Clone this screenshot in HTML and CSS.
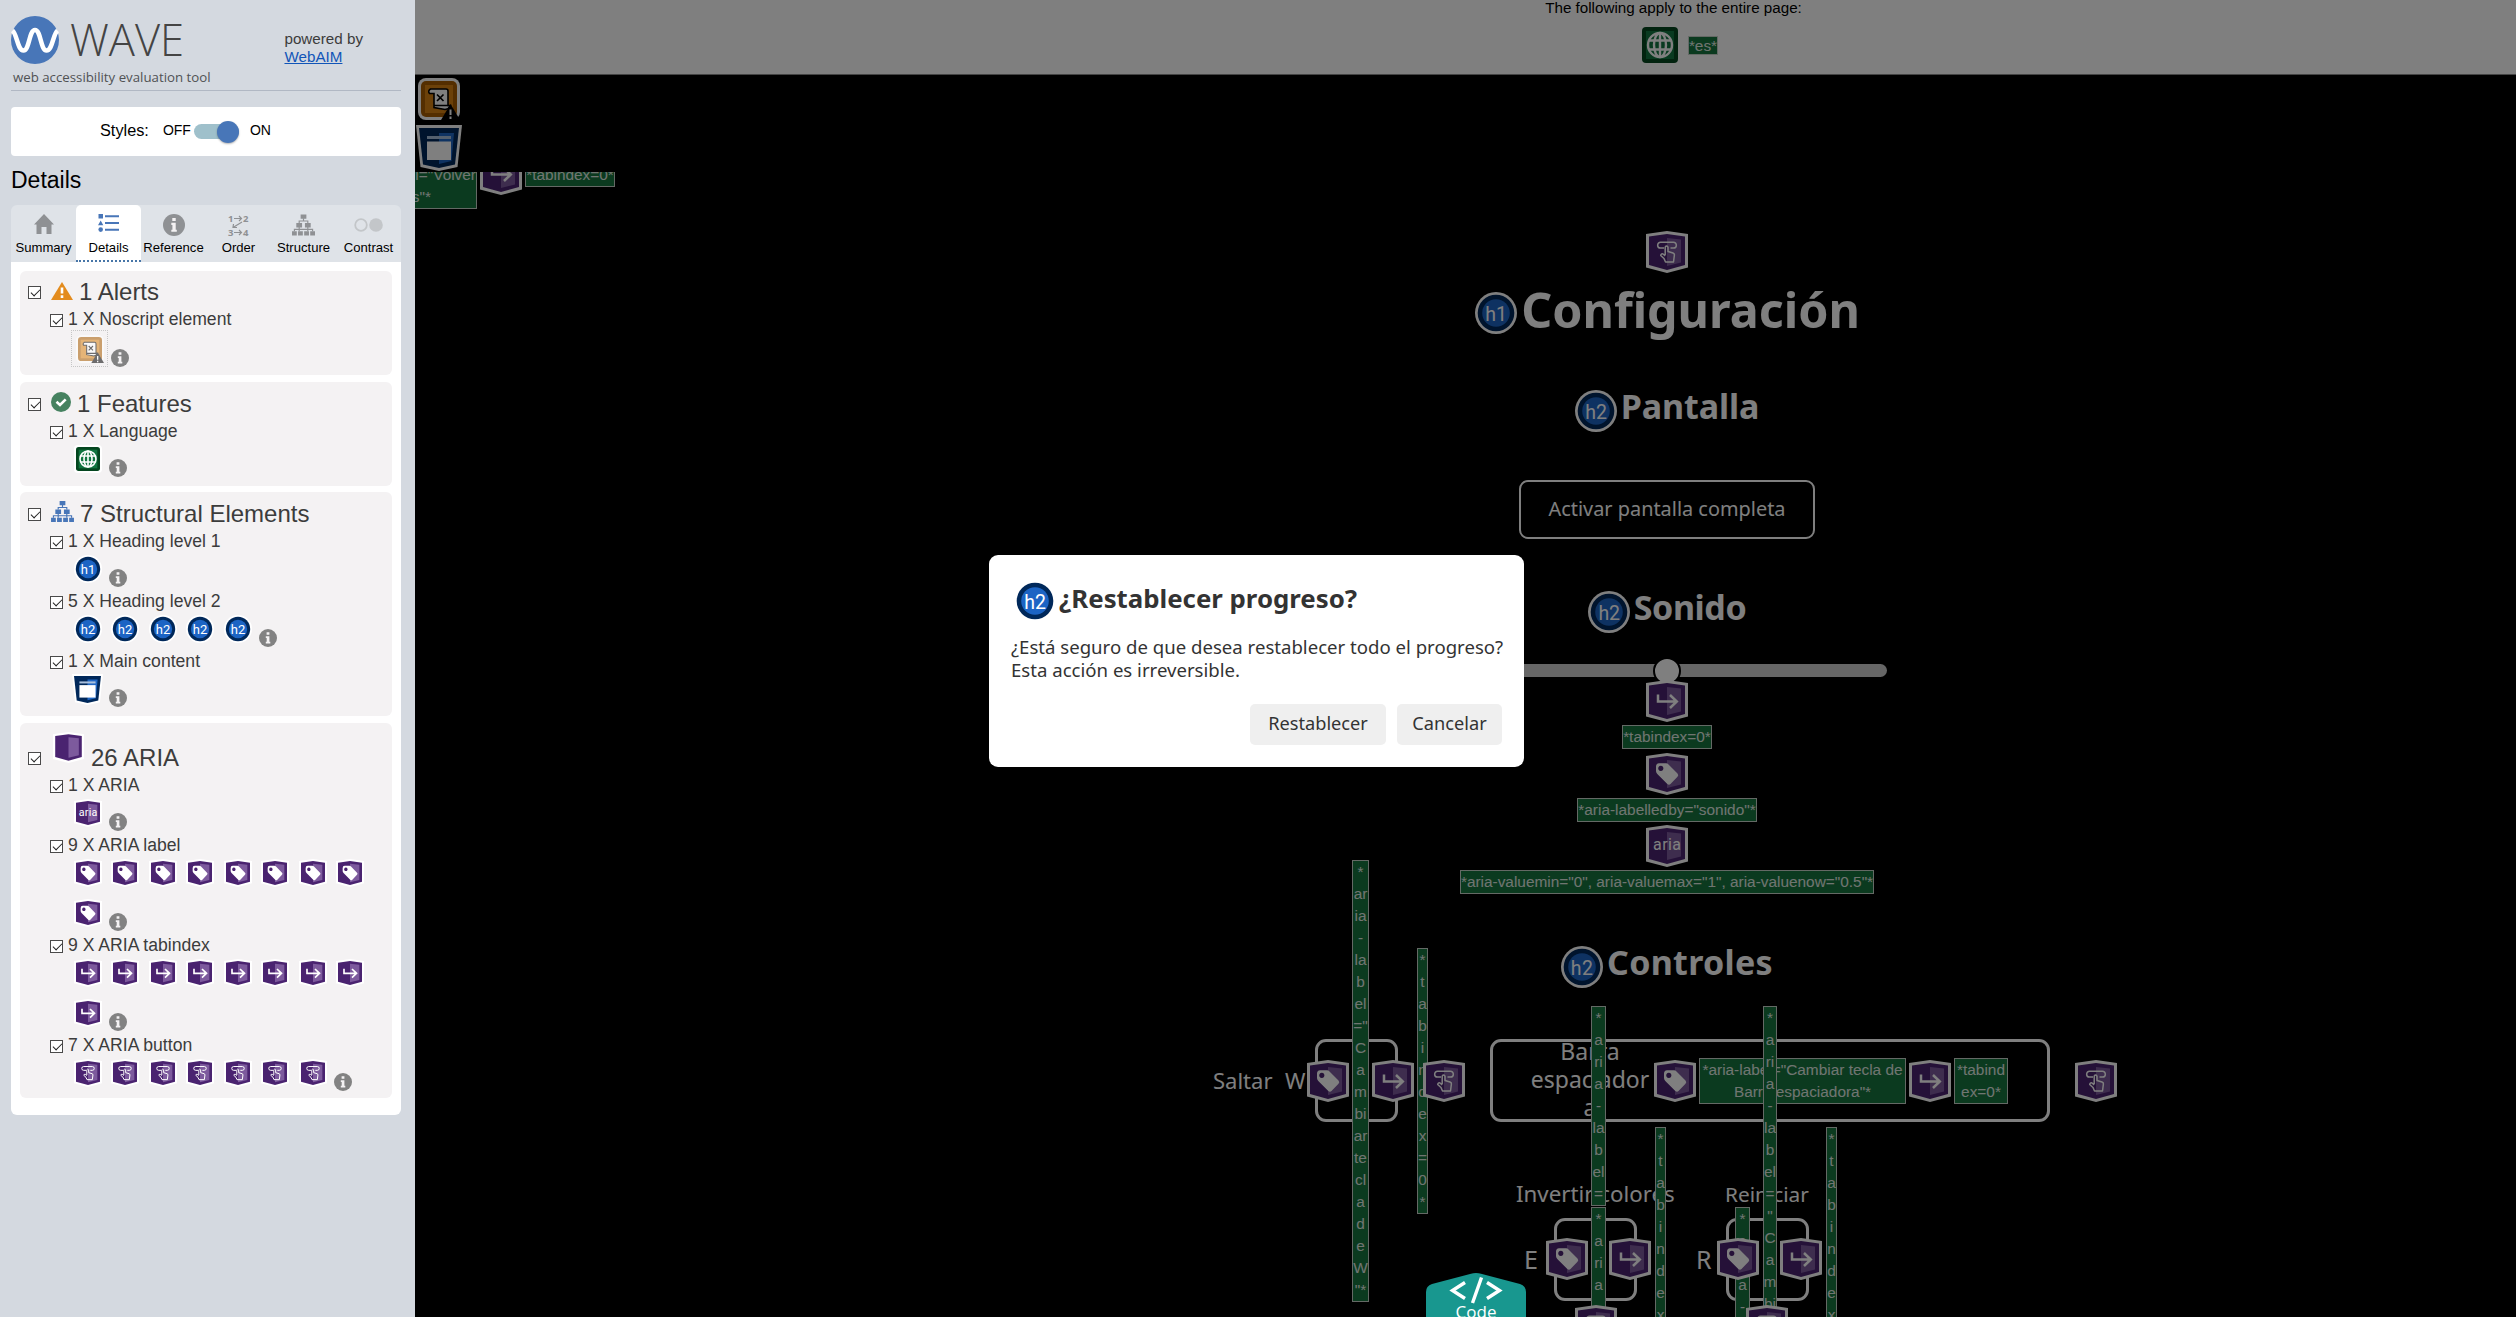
FILE: index.html
```html
<!DOCTYPE html>
<html lang="es">
<head>
<meta charset="utf-8">
<title>WAVE - Configuración</title>
<link rel="stylesheet" href="styles.css">
</head>
<body>
<svg class="sprite" aria-hidden="true">
  <symbol id="i-box" viewBox="0 0 42 42">
    <path d="M0 3 21 0 42 3V36.500L21 42 0 36.500Z" fill="#fff"/>
    <path d="M3 5.500 21 3 39 5.500V34L21 39 3 34Z" fill="#4a2370"/>
    <path d="M21 7 35 8.500V31.500L21 35Z" fill="#7d5a9d"/>
  </symbol>
  <symbol id="i-label" viewBox="0 0 42 42">
    <use href="#i-box"/>
    <path fill-rule="evenodd" d="M10 13.500Q10 10.500 13 10.300L20 10.300Q21.500 10.400 22.500 11.400L31.500 20.500Q33 22.200 31.500 23.800L24.500 31Q23 32.500 21.300 31L11.300 21Q10 19.500 10 18ZM14.800 12.800a2.600 2.600 0 1 0 .01 0Z" fill="#fff"/>
  </symbol>
  <symbol id="i-tab" viewBox="0 0 42 42">
    <use href="#i-box"/>
    <path d="M12 14.500V21.500H30.500M24 15 30.800 21.500 24 28" fill="none" stroke="#fff" stroke-width="2.500"/>
  </symbol>
  <symbol id="i-aria" viewBox="0 0 42 42">
    <use href="#i-box"/>
    <text x="21" y="25" text-anchor="middle" textLength="28" class="glyph-aria">aria</text>
  </symbol>
  <symbol id="i-button" viewBox="0 0 42 42">
    <use href="#i-box"/>
    <path d="M18 17H14.500A2.800 2.800 0 0 1 14.500 11.300H27.500A2.800 2.800 0 0 1 27.500 17H24.500" fill="none" stroke="#fff" stroke-width="1.500"/>
    <path d="M19.200 24V16.200Q20.500 14 22 16.200V20.500L27 22Q28.600 22.500 28.400 24L27.500 31H19.500L18 27.500 14.700 24.500Q15 22.300 17 23L19.200 24.800" fill="none" stroke="#fff" stroke-width="1.500" stroke-linejoin="round"/>
  </symbol>
  <symbol id="i-h1" viewBox="0 0 42 42">
    <circle cx="21" cy="21" r="21" fill="#fff"/><circle cx="21" cy="21" r="18.300" fill="#00285a"/><circle cx="21" cy="21" r="13.800" fill="#1c64c4"/>
    <text x="21" y="28.500" text-anchor="middle" class="glyph-h">h1</text>
  </symbol>
  <symbol id="i-h2" viewBox="0 0 42 42">
    <circle cx="21" cy="21" r="21" fill="#fff"/><circle cx="21" cy="21" r="18.300" fill="#00285a"/><circle cx="21" cy="21" r="13.800" fill="#1c64c4"/>
    <text x="21" y="28.500" text-anchor="middle" class="glyph-h">h2</text>
  </symbol>
  <symbol id="i-lang" viewBox="0 0 42 42">
    <rect width="42" height="42" rx="6" fill="#fff"/><rect x="3" y="3" width="36" height="36" rx="4" fill="#04461f"/><rect x="7" y="7" width="28" height="28" fill="#127540"/>
    <g fill="none" stroke="#fff" stroke-width="2.400"><circle cx="21" cy="21" r="12"/><ellipse cx="21" cy="21" rx="6" ry="12"/><path d="M21 9V33M10 16.500H32M10 25.500H32"/></g>
  </symbol>
  <symbol id="i-main" viewBox="0 0 46 46">
    <path d="M0 0H46L41.500 42 23 46 4.500 42Z" fill="#fff"/><path d="M3 3H43L39 39.500 23 43 7 39.500Z" fill="#00285a"/>
    <path d="M23 8H38L35.500 36 23 39Z" fill="#1f66c4"/><path d="M11 11H35V14H11Z" fill="#a9c0dd"/><path d="M11 16.500H35V35H11Z" fill="#fff"/>
  </symbol>
  <symbol id="i-noscript" viewBox="0 0 42 42">
    <rect width="42" height="42" rx="8" fill="#fff"/><rect x="3" y="3" width="36" height="36" rx="5" fill="#a85c00"/><rect x="7" y="7" width="28" height="28" fill="#d98212"/>
    <path d="M15 11H28Q30 11 30 13V27.500H32.500Q31 31 27 31.500L16 29.500V15.500H11.500Q9.500 13 12.500 11Z" fill="#fff" stroke="#000" stroke-width="1.600"/>
    <path d="M19 16.500 25.500 23M25.500 16.500 19 23M16 27.500H31" stroke="#000" stroke-width="1.700" fill="none"/>
    <path d="M32.500 26 42 42H23Z" fill="#000"/><path d="M32.500 31.500V37M32.500 38.500V41" stroke="#fff" stroke-width="2"/>
  </symbol>
  <symbol id="i-info" viewBox="0 0 18 18">
    <circle cx="9" cy="9" r="9"/><path d="M7.600 3.200H10.400V5.800H7.600ZM6.800 7.200H10.400V12.800H11.300V14.500H6.800V12.800H7.700V8.900H6.800Z" fill="#f4f2f3"/>
  </symbol>
  <symbol id="i-tree" viewBox="0 0 24 22">
    <path d="M9 0h6v4.500H9zM4.500 9h6v4.500h-6zM13.500 9h6v4.500h-6zM0 17.500h5V22H0zM6.300 17.500h5V22h-5zM12.700 17.500h5V22h-5zM19 17.500h5V22h-5z"/>
    <path d="M12 4V6.800M7.500 9V6.800H16.500V9M7.500 13V17.500M16.500 13V17.500M2.500 17.500V15.500H21.500V17.500" fill="none" stroke="currentColor" stroke-width="1.200"/>
  </symbol>
</svg>

<div class="app">
<aside class="sidebar">
  <header class="brand">
    <div class="brand-mark">
      <div class="logo-row">
        <svg class="logo" viewBox="0 0 48 48"><circle cx="24" cy="24" r="24" fill="#4876b8"/><path d="M1.500 14.500C6 18 6.500 34.500 12.500 34.500S18 14 24 14 29.500 34.500 35.500 34.500 42 18 46.500 14.500" fill="none" stroke="#fff" stroke-width="4.600"/></svg>
        <span class="wordmark">WAVE</span>
      </div>
      <div class="tagline">web accessibility evaluation tool</div>
    </div>
    <div class="powered">powered by<br><a href="#">WebAIM</a></div>
  </header>

  <div class="styles-toggle">
    <span class="toggle-title">Styles:</span><span class="toggle-off">OFF</span><span class="switch"><span class="knob"></span></span><span>ON</span>
  </div>

  <h1 class="panel-title">Details</h1>

  <nav class="tabs">
    <div class="tab"><svg class="t-home" viewBox="0 0 20 20"><path d="M10 0 20 10.500H17.500V20H12.500V13H7.500V20H2.500V10.500H0Z"/></svg>Summary</div>
    <div class="tab active"><svg class="t-list" viewBox="0 0 21 18"><path d="M.5 0H5V4.500H.5ZM2.700 6.500 5.300 11.300H0ZM7 1.300H21V3.300H7ZM7 8H21V10H7ZM7 14.700H21V16.700H7Z"/><circle cx="2.700" cy="15.600" r="2.300"/></svg>Details</div>
    <div class="tab"><svg class="t-info"><use href="#i-info"/></svg>Reference</div>
    <div class="tab"><svg class="t-order" viewBox="0 0 21 22"><text x="0" y="8">1</text><text x="15" y="8">2</text><text x="0" y="22">3</text><text x="15" y="22">4</text><path d="M6 4.500H13.500M11 2 13.500 4.500 11 7M6 18.500H13.500M11 16 13.500 18.500 11 21M14 8 5 13.500M5.500 10 5 13.500H9" fill="none" stroke="#8f9194" stroke-width="1.200"/></svg>Order</div>
    <div class="tab"><svg class="t-tree"><use href="#i-tree"/></svg>Structure</div>
    <div class="tab"><svg class="t-contrast" viewBox="0 0 29 14"><circle cx="7" cy="7" r="5.800" fill="none" stroke="#c3c6c9" stroke-width="1.800"/><circle cx="22" cy="7" r="6.800" fill="#c3c6c9"/></svg>Contrast</div>
  </nav>

  <div class="panel">
    <section class="group first">
      <h2 class="group-title"><span class="check"></span><svg class="gi warn" viewBox="0 0 22 18"><path d="M11 0 22 18H0Z" fill="#e38b1d"/><path d="M11 5.500V11.500M11 13.300V16" stroke="#fff" stroke-width="2.600"/></svg>1 Alerts</h2>
      <h3 class="item-title"><span class="check"></span>1 X Noscript element</h3>
      <div class="icons"><span class="slot hidden-icon"><svg><use href="#i-noscript"/></svg></span><svg class="info"><use href="#i-info"/></svg></div>
    </section>
    <section class="group">
      <h2 class="group-title"><span class="check"></span><svg class="gi ok" viewBox="0 0 20 20"><circle cx="10" cy="10" r="10" fill="#468260"/><path d="M5.500 9.800 9 13 14.700 7.300" fill="none" stroke="#fff" stroke-width="2.600"/></svg>1 Features</h2>
      <h3 class="item-title"><span class="check"></span>1 X Language</h3>
      <div class="icons"><span class="slot"><svg><use href="#i-lang"/></svg></span><svg class="info"><use href="#i-info"/></svg></div>
    </section>
    <section class="group">
      <h2 class="group-title"><span class="check"></span><svg class="gi tree"><use href="#i-tree"/></svg>7 Structural Elements</h2>
      <h3 class="item-title"><span class="check"></span>1 X Heading level 1</h3>
      <div class="icons"><span class="slot"><svg><use href="#i-h1"/></svg></span><svg class="info"><use href="#i-info"/></svg></div>
      <h3 class="item-title"><span class="check"></span>5 X Heading level 2</h3>
      <div class="icons"><span class="slot"><svg><use href="#i-h2"/></svg></span><span class="slot"><svg><use href="#i-h2"/></svg></span><span class="slot"><svg><use href="#i-h2"/></svg></span><span class="slot"><svg><use href="#i-h2"/></svg></span><span class="slot"><svg><use href="#i-h2"/></svg></span><svg class="info"><use href="#i-info"/></svg></div>
      <h3 class="item-title"><span class="check"></span>1 X Main content</h3>
      <div class="icons"><span class="slot"><svg class="wide"><use href="#i-main"/></svg></span><svg class="info"><use href="#i-info"/></svg></div>
    </section>
    <section class="group aria-group">
      <h2 class="group-title"><span class="check"></span><svg class="gi box"><use href="#i-box"/></svg>26 ARIA</h2>
      <h3 class="item-title"><span class="check"></span>1 X ARIA</h3>
      <div class="icons"><span class="slot"><svg><use href="#i-aria"/></svg></span><svg class="info"><use href="#i-info"/></svg></div>
      <h3 class="item-title"><span class="check"></span>9 X ARIA label</h3>
      <div class="icons"><span class="slot"><svg><use href="#i-label"/></svg></span><span class="slot"><svg><use href="#i-label"/></svg></span><span class="slot"><svg><use href="#i-label"/></svg></span><span class="slot"><svg><use href="#i-label"/></svg></span><span class="slot"><svg><use href="#i-label"/></svg></span><span class="slot"><svg><use href="#i-label"/></svg></span><span class="slot"><svg><use href="#i-label"/></svg></span><span class="slot"><svg><use href="#i-label"/></svg></span><span class="slot"><svg><use href="#i-label"/></svg></span><svg class="info"><use href="#i-info"/></svg></div>
      <h3 class="item-title"><span class="check"></span>9 X ARIA tabindex</h3>
      <div class="icons"><span class="slot"><svg><use href="#i-tab"/></svg></span><span class="slot"><svg><use href="#i-tab"/></svg></span><span class="slot"><svg><use href="#i-tab"/></svg></span><span class="slot"><svg><use href="#i-tab"/></svg></span><span class="slot"><svg><use href="#i-tab"/></svg></span><span class="slot"><svg><use href="#i-tab"/></svg></span><span class="slot"><svg><use href="#i-tab"/></svg></span><span class="slot"><svg><use href="#i-tab"/></svg></span><span class="slot"><svg><use href="#i-tab"/></svg></span><svg class="info"><use href="#i-info"/></svg></div>
      <h3 class="item-title"><span class="check"></span>7 X ARIA button</h3>
      <div class="icons"><span class="slot"><svg><use href="#i-button"/></svg></span><span class="slot"><svg><use href="#i-button"/></svg></span><span class="slot"><svg><use href="#i-button"/></svg></span><span class="slot"><svg><use href="#i-button"/></svg></span><span class="slot"><svg><use href="#i-button"/></svg></span><span class="slot"><svg><use href="#i-button"/></svg></span><span class="slot"><svg><use href="#i-button"/></svg></span><svg class="info"><use href="#i-info"/></svg></div>
    </section>
  </div>
</aside>

<div class="viewport">
  <div class="page-notes">
    <p>The following apply to the entire page:</p>
    <div class="page-icons"><svg class="icon"><use href="#i-lang"/></svg><span class="tag small">*es*</span></div>
  </div>

  <main class="page">
    <svg class="icon"><use href="#i-button"/></svg>
    <h1 class="heading big"><svg class="icon"><use href="#i-h1"/></svg><span>Configuración</span></h1>
    <h2 class="heading pantalla"><svg class="icon"><use href="#i-h2"/></svg><span>Pantalla</span></h2>
    <button class="fullscreen">Activar pantalla completa</button>
    <h2 class="heading sonido"><svg class="icon"><use href="#i-h2"/></svg><span>Sonido</span></h2>
    <div class="slider"><span class="thumb"></span></div>
    <div class="slider-notes">
      <svg class="icon"><use href="#i-tab"/></svg><span class="tag">*tabindex=0*</span>
      <svg class="icon"><use href="#i-label"/></svg><span class="tag">*aria-labelledby="sonido"*</span>
      <svg class="icon"><use href="#i-aria"/></svg><span class="tag">*aria-valuemin="0", aria-valuemax="1", aria-valuenow="0.5"*</span>
    </div>
    <h2 class="heading controles"><svg class="icon"><use href="#i-h2"/></svg><span>Controles</span></h2>

    <div class="controls">
      <div class="key-row">
        <span class="key-name">Saltar</span><span class="key-char">W</span>
        <span class="key"></span>
        <span class="key space"><span>Barra<br>espaciador<br>a</span></span>
      </div>
      <div class="key-cols">
        <div class="key-col"><span class="col-name">Invertir colores</span><span class="key-line"><span class="key-char">E</span><span class="key"></span></span></div>
        <div class="key-col reset"><span class="col-name">Reiniciar</span><span class="key-line"><span class="key-char">R</span><span class="key"></span></span></div>
      </div>

      <span class="tag note n-wlabel">*
ar
ia
-
la
b
el
="
C
a
m
bi
ar
te
cl
a
d
e
W
"*</span>
      <span class="tag note n-wtab">*
t
a
b
i
n
d
e
x
=
0
*</span>
      <svg class="icon note p1"><use href="#i-label"/></svg>
      <svg class="icon note p2"><use href="#i-tab"/></svg>
      <svg class="icon note p3"><use href="#i-button"/></svg>

      <svg class="icon note p4"><use href="#i-label"/></svg>
      <span class="tag note n-space">*aria-label="Cambiar tecla de
Barra espaciadora"*</span>
      <svg class="icon note p5"><use href="#i-tab"/></svg>
      <span class="tag note n-spacetab">*tabind
ex=0*</span>
      <svg class="icon note p6"><use href="#i-button"/></svg>

      <span class="tag note n-e">*
a
ri
a
-
la
b
el
=</span>
      <span class="tag note n-e2">*
a
ri
a
-</span>
      <span class="tag note n-etab">*
t
a
b
i
n
d
e
x</span>
      <span class="tag note n-r2">*
a
ri
a
-</span>
      <span class="tag note n-r">*
a
ri
a
-
la
b
el
=
"
C
a
m
bi</span>
      <span class="tag note n-rtab">*
t
a
b
i
n
d
e
x</span>
      <svg class="icon note p7"><use href="#i-label"/></svg>
      <svg class="icon note p8"><use href="#i-tab"/></svg>
      <svg class="icon note p9"><use href="#i-button"/></svg>
      <svg class="icon note p10"><use href="#i-label"/></svg>
      <svg class="icon note p11"><use href="#i-tab"/></svg>
      <svg class="icon note p12"><use href="#i-button"/></svg>
    </div>
  </main>

  <div class="corner">
    <svg class="icon noscript"><use href="#i-noscript"/></svg>
    <svg class="icon wide"><use href="#i-main"/></svg>
    <div class="back-notes"><span class="tag back-label">l="Volver<br><span class="back-end">s"*</span></span><svg class="icon"><use href="#i-tab"/></svg><span class="tag">*tabindex=0*</span></div>
  </div>
  <div class="backdrop"></div>
</div>
</div>

<div class="code-tab">
  <svg viewBox="0 0 100 60"><path d="M50 0Q53 0 55 .8L94 11Q100 13 100 19V60H0V19Q0 13 6 11L45 .8Q47 0 50 0Z" fill="#18978f"/><path d="M39 9.500 26.500 17.500 39 25.500M61 9.500 73.500 17.500 61 25.500M55.500 4.500 46.500 30" fill="none" stroke="#fff" stroke-width="3.400"/></svg>
  <span>Code</span>
</div>

<div class="dialog" role="dialog">
  <h2 class="dialog-title"><svg class="icon"><use href="#i-h2"/></svg><span>¿Restablecer progreso?</span></h2>
  <p>¿Está seguro de que desea restablecer todo el progreso?<br>Esta acción es irreversible.</p>
  <div class="dialog-actions"><button class="reset-btn">Restablecer</button><button class="cancel-btn">Cancelar</button></div>
</div>
</body>
</html>
```
FILE: styles.css
```css
* { box-sizing: border-box; }
body {
  margin: 0;
  width: 2516px;
  height: 1317px;
  overflow: hidden;
  position: relative;
  font-family: "Liberation Sans", Arial, sans-serif;
  font-size: 16px;
  color: #000;
}
h1, h2, h3, p { margin: 0; font-weight: 400; }
button { border: 0; padding: 0; }
svg { display: block; flex: none; }
.sprite { position: absolute; width: 0; height: 0; }
.glyph-h { font: 400 19.500px Roboto, sans-serif; fill: #fff; }
.glyph-aria { font: 400 16px Roboto, sans-serif; fill: #fff; }
.app { display: flex; height: 1317px; }

/* sidebar */
.sidebar { width: 415px; flex: none; background: #d4d9e0; padding: 0 14px 0 11px; color: #3c3c3c; }
.brand { display: flex; justify-content: space-between; height: 91px; border-bottom: 1px solid #b1b8c4; padding: 15px 38px 0 0; }
.logo-row { display: flex; align-items: center; height: 50px; }
.logo { width: 48px; height: 48px; }
.wordmark { font: 300 43.500px/50px "Open Sans", sans-serif; letter-spacing: 0; margin-left: 11px; color: #444; }
.tagline { font: 400 13.250px/20px "Open Sans", sans-serif; color: #505254; padding-left: 2px; margin-top: 2px; white-space: nowrap; }
.powered { font-size: 15.200px; line-height: 18px; padding-top: 15px; }
.powered a { color: #1155b8; }
.styles-toggle { display: flex; align-items: center; height: 49px; margin-top: 16px; background: #fff; border-radius: 4px; padding: 0 0 3px 89px; font-size: 14px; color: #000; }
.toggle-title { font-size: 16.300px; margin-right: 14px; }
.toggle-off { margin-right: 3px; }
.switch { width: 45px; height: 15px; border-radius: 8px; background: #9fc0cb; margin: 3px 11px 0 0; display: flex; align-items: center; justify-content: flex-end; }
.knob { width: 22px; height: 22px; border-radius: 50%; background: #4876b8; box-shadow: 0 1px 2px rgba(0,0,0,.3); }
.panel-title { font-size: 23px; line-height: 26px; margin-top: 11px; height: 38px; color: #000; }
.tabs { display: flex; height: 57px; background: #dfe3e8; border-radius: 6px 6px 0 0; color: #000; font-size: 13.100px; }
.tab { width: 65px; display: flex; flex-direction: column; align-items: center; justify-content: flex-end; padding-bottom: 7px; line-height: 15px; }
.tab svg { fill: #8f9194; color: #8f9194; }
.tab.active { background: #fff; border-radius: 5px 5px 0 0; border-bottom: 2px dotted #4876a8; padding-bottom: 5px; }
.tab.active svg { fill: #4876b8; }
.t-home { width: 20px; height: 20px; margin-bottom: 6px; }
.t-list { width: 21px; height: 18px; margin-bottom: 8px; }
.t-info { width: 22px; height: 22px; margin-bottom: 4px; }
.t-order { width: 21px; height: 22px; margin-bottom: 4px; overflow: visible; font: 700 9.500px "Open Sans", sans-serif; }
.t-tree { width: 23px; height: 22px; margin-bottom: 4px; }
.t-contrast { width: 29px; height: 14px; margin-bottom: 8px; }

.panel { background: #fff; height: 853px; border-radius: 0 0 6px 6px; padding: 9px; display: flex; flex-direction: column; gap: 6.500px; }
.group { background: #f4f2f3; border-radius: 6px; padding: 6px 0 6px 8px; }
.group.first { padding-top: 5px; padding-bottom: 7px; }
.check { width: 13px; height: 13px; border: 1px solid #4a4a4a; background: #fff; flex: none; display: flex; }
.check::after { content: ""; width: 8px; height: 4px; margin: 2px 0 0 1.500px; border: solid #222; border-width: 0 0 1.500px 1.500px; transform: rotate(-45deg); }
.group-title { display: flex; align-items: center; height: 32px; font-size: 24px; line-height: 32px; white-space: pre; }
.gi { margin: 0 7px 0 10px; }
.group-title .check, .item-title .check { margin-top: 1px; }
.warn { width: 22px; height: 18px; margin: -3px 6px 0 10px; }
.ok { width: 20px; height: 20px; margin: -4px 6px 0 10px; }
.tree { width: 23px; height: 21px; margin: -5px 6px 0 10px; fill: #4876b8; color: #4876b8; }
.item-title { display: flex; align-items: center; height: 24px; font-size: 17.600px; line-height: 22px; padding-left: 22px; gap: 5px; padding-bottom: 2px; }
.item-title .check { margin-top: 3px; }
.icons { display: flex; flex-wrap: wrap; row-gap: 10px; padding: 0 0 6px 41px; }
.slot { width: 37.500px; height: 30px; display: flex; align-items: center; justify-content: center; }
.slot svg { width: 28px; height: 28px; }
.slot svg.wide { width: 31px; height: 31px; }
.hidden-icon { width: 37px; height: 37px; border: 1px dotted #c6c6c6; margin: -2px 0 -5px 2px; }
.hidden-icon svg { opacity: .55; }
.info { width: 18px; height: 18px; fill: #828282; margin: 15px 0 -3px 2.500px; }
.first .info { margin-top: 17px; margin-bottom: -5px; }
.aria-group { padding-top: 6px; padding-bottom: 4px; }
.aria-group .group-title { height: 45px; padding-top: 14px; }
.box { width: 31px; height: 31px; margin: -21px 7px 0 12px; }

/* inspected page */
.viewport { position: relative; flex: 1; overflow: hidden; background: #000; }
.page-notes { width: 2516px; height: 75px; background: #fff; border-bottom: 1px solid #888; text-align: center; font-size: 15.200px; }
.page-notes p { line-height: 16px; height: 25px; padding-left: 1px; }
.page-icons { display: flex; justify-content: center; align-items: center; gap: 7px; padding-left: 11px; height: 40px; }
.icon { width: 42px; height: 42px; }
.icon.wide { width: 46px; height: 46px; }
.tag { font-size: 15.400px; line-height: 22px; color: #e0ebe3; background: #16743f; border: 1px solid #c8d2cb; white-space: pre-line; text-align: center; }
.tag.small { line-height: 17px; font-size: 15.400px; }
.page { width: 2504px; display: flex; flex-direction: column; align-items: center; padding-top: 156px; font-family: "Noto Sans", sans-serif; color: #fff; }
.heading { display: flex; align-items: center; gap: 4px; height: 42px; font-weight: 700; white-space: nowrap; }
.heading span { margin-bottom: 10px; }
.big { margin-top: 19px; font-size: 48.400px; padding-left: 1px; }
.big span { margin-bottom: 9px; }
.pantalla { margin-top: 56px; font-size: 34px; letter-spacing: -.1px; }
.fullscreen { width: 296px; height: 59px; margin-top: 48px; border: 2px solid #fff; border-radius: 9px; background: #000; color: #fff; font: 400 19.900px "Noto Sans", sans-serif; padding-bottom: 3px; }
.sonido { margin-top: 52px; font-size: 34px; letter-spacing: -.4px; }
.slider { width: 440px; height: 13px; margin-top: 31px; border-radius: 7px; background: #ccc; display: flex; align-items: center; justify-content: center; }
.thumb { width: 28px; height: 28px; border: 2px solid #000; border-radius: 50%; background: #fff; flex: none; }
.slider-notes { display: flex; flex-direction: column; align-items: center; gap: 3.300px; margin-top: 3px; font-family: "Liberation Sans", Arial, sans-serif; position: relative; }
.controles { margin-top: 52px; font-size: 34px; letter-spacing: .3px; }
.controls { position: relative; width: 2504px; height: 278px; margin-top: 51px; font-size: 22px; }
.key-row { display: flex; align-items: center; padding-left: 798px; height: 83px; }
.key-name { width: 72px; margin-bottom: 2px; }
.key-char { width: 30px; margin-bottom: 2px; }
.key { width: 83px; height: 83px; border: 3px solid #fff; border-radius: 11px; flex: none; }
.key.space { width: 560px; margin-left: 92px; text-align: center; line-height: 28px; padding-left: 37px; display: flex; align-items: center; font-size: 23px; }
.key.space span { width: 120px; white-space: nowrap; margin-top: -4px; }
.key-cols { display: flex; padding: 58px 0 0 1101px; gap: 23px; }
.key-col { width: 148px; display: flex; flex-direction: column; font-size: 22.300px; }
.col-name { white-space: nowrap; height: 38px; line-height: 28px; }
.reset .col-name { padding-left: 38px; font-size: 20.800px; }
.key-line { display: flex; align-items: center; padding-left: 8px; font-size: 25px; }
.reset .key-line { padding-left: 9px; }

/* inspector annotations float over the inspected controls */
.note { position: absolute; font-family: "Liberation Sans", Arial, sans-serif; }
.n-wlabel { left: 937px; top: -179px; width: 17px; }
.n-wtab { left: 1002px; top: -91px; width: 11px; }
.n-wlabel, .n-wtab, .n-e, .n-e2, .n-etab, .n-r, .n-r2, .n-rtab { display: flex; justify-content: center; }
.n-space { left: 1284px; top: 19px; width: 207px; }
.n-spacetab { left: 1539px; top: 19px; width: 54px; }
.n-e { left: 1176px; top: -33px; width: 15px; }
.n-e2 { left: 1176px; top: 168px; width: 15px; }
.n-etab { left: 1240px; top: 88px; width: 11px; }
.n-r { left: 1348px; top: -33px; width: 14px; }
.n-r2 { left: 1320px; top: 168px; width: 15px; }
.n-rtab { left: 1411px; top: 88px; width: 11px; }
.p1, .p2, .p3, .p4, .p5, .p6 { top: 21px; }
.p1 { left: 892px; } .p2 { left: 957px; } .p3 { left: 1008px; }
.p4 { left: 1239px; } .p5 { left: 1494px; } .p6 { left: 1660px; }
.p7, .p8, .p10, .p11 { top: 199px; }
.p9, .p12 { top: 266px; }
.p7 { left: 1131px; } .p8 { left: 1194px; } .p9 { left: 1160px; }
.p10 { left: 1302px; } .p11 { left: 1365px; } .p12 { left: 1331px; }

.corner { position: absolute; left: 0; top: 78px; width: 210px; }
.corner .noscript { margin-left: 3px; }
.corner .wide { margin: 5px 0 1px 1px; }
.back-notes { display: flex; align-items: flex-start; gap: 3px; height: 40px; overflow: hidden; }
.back-notes .icon { margin-top: -19px; }
.back-notes .tag { margin-top: -9px; width: 90px; }
.back-notes .back-label { width: 76px; margin-left: -14px; text-align: right; }
.back-end { padding-right: 45px; }
.backdrop { position: absolute; inset: 0; background: rgba(0, 0, 0, .5); }

.code-tab { position: absolute; left: 1426px; top: 1273px; width: 100px; height: 44px; overflow: hidden; color: #fff; }
.code-tab svg { width: 100px; height: 60px; }
.code-tab span { position: absolute; left: 0; right: 0; top: 30px; text-align: center; font: 400 17px/18px "Open Sans", sans-serif; }

.dialog { position: absolute; left: 989px; top: 555px; width: 535px; height: 212px; background: #fff; border-radius: 9px; padding: 25px 22px 22px; font-family: "Noto Sans", sans-serif; color: #333; display: flex; flex-direction: column; }
.dialog-title { display: flex; align-items: center; gap: 3px; height: 42px; padding-left: 3px; font-size: 25.800px; font-weight: 700; }
.dialog-title span { margin-bottom: 6px; }
.dialog p { font-size: 18.600px; line-height: 23px; margin-top: 13px; white-space: nowrap; }
.dialog-actions { display: flex; justify-content: flex-end; gap: 11px; margin-top: auto; }
.dialog-actions button { height: 41px; border-radius: 5px; background: #efefef; color: #333; font: 400 18.200px "Noto Sans", sans-serif; padding-bottom: 3px; }
.reset-btn { width: 136px; }
.cancel-btn { width: 105px; }
```
